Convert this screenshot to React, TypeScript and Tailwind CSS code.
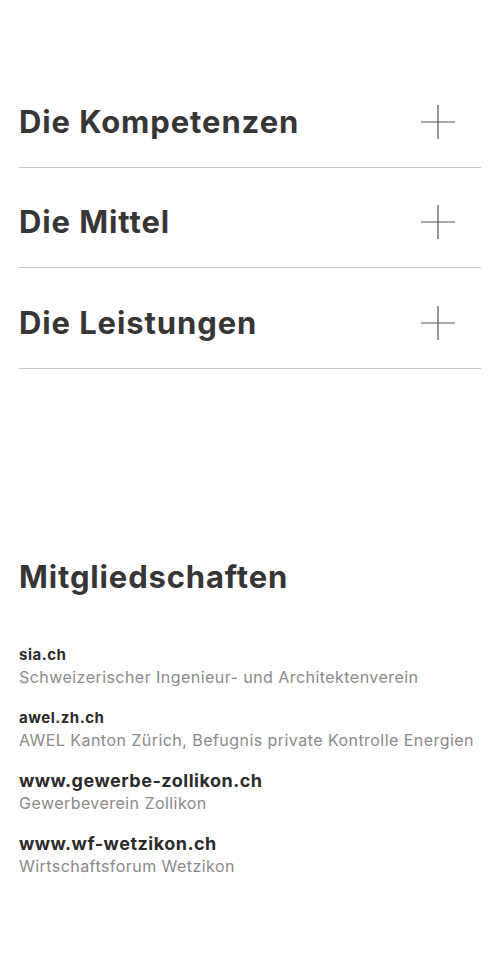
import React from 'react';

const sections = ['Die Kompetenzen', 'Die Mittel', 'Die Leistungen'];

const members = [
  { name: 'sia.ch', desc: 'Schweizerischer Ingenieur- und Architektenverein', big: false },
  { name: 'awel.zh.ch', desc: 'AWEL Kanton Zürich, Befugnis private Kontrolle Energien', big: false },
  { name: 'www.gewerbe-zollikon.ch', desc: 'Gewerbeverein Zollikon', big: true },
  { name: 'www.wf-wetzikon.ch', desc: 'Wirtschaftsforum Wetzikon', big: true },
];

const PlusIcon = () => (
  <svg width="34" height="34" viewBox="0 0 34 34" className="shrink-0">
    <line x1="17" y1="0" x2="17" y2="34" stroke="#555" strokeWidth="1.2" />
    <line x1="0" y1="17" x2="34" y2="17" stroke="#555" strokeWidth="1.2" />
  </svg>
);

export default function App() {
  return (
    <div className="w-[500px] min-h-[959px] bg-white text-[#363636] font-['Inter',sans-serif]">
      <div className="px-[19px] pt-[67px]">
        {sections.map((s) => (
          <div key={s} className="flex items-center justify-between h-[100.5px] pt-[10px] border-b border-[#c8c8c8] pr-[26px]">
            <h2 className="text-[31px] font-bold tracking-[0.9px]">{s}</h2>
            <PlusIcon />
          </div>
        ))}
      </div>

      <div className="px-[19px] pt-[188px]">
        <h2 className="text-[31px] font-bold leading-[40px] tracking-[0.85px]">Mitgliedschaften</h2>
        <div className="mt-[46px] flex flex-col gap-[17px]">
          {members.map((m) => (
            <div key={m.name}>
              <div className={`font-bold text-[#2b2b2b] tracking-[0.5px] ${m.big ? 'text-[18px] leading-[23px]' : 'text-[15px] leading-[23px]'}`}>
                {m.name}
              </div>
              <div className="text-[16px] leading-[23px] tracking-[0.45px] text-[#8a8a8a]">{m.desc}</div>
            </div>
          ))}
        </div>
      </div>
    </div>
  );
}
